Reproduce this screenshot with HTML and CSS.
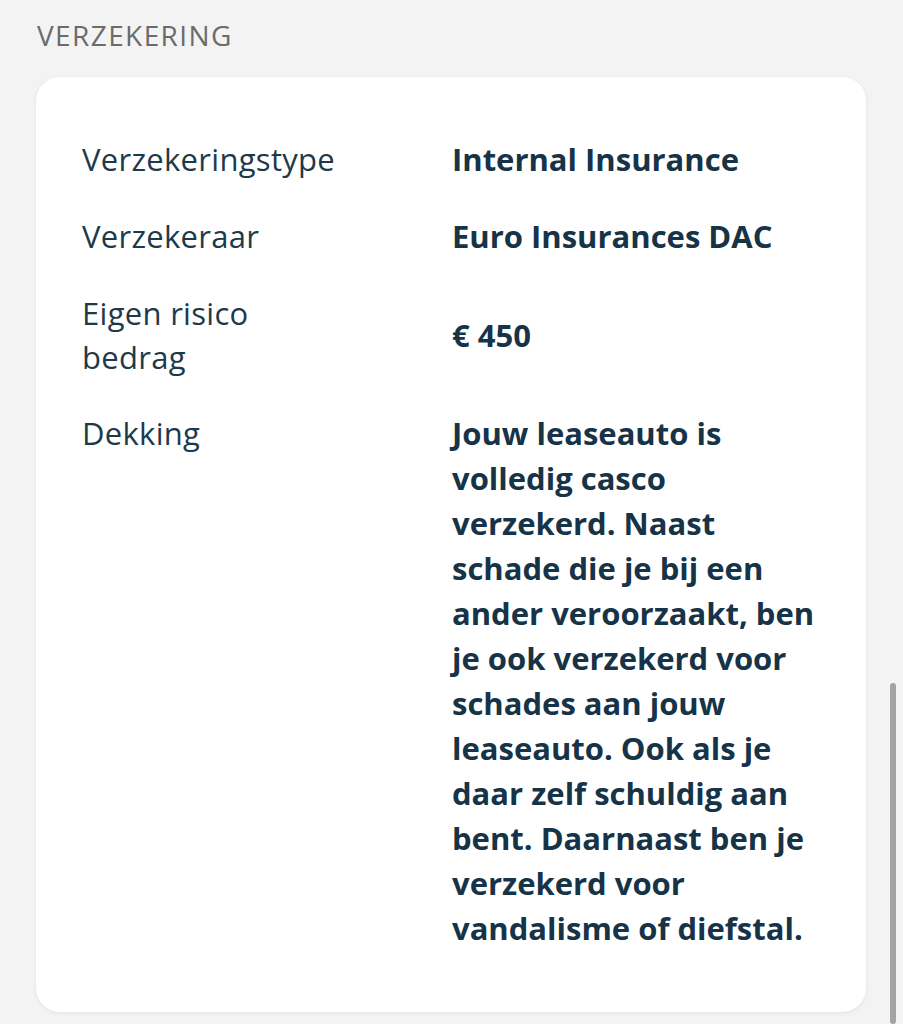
FILE: index.html
```html
<!DOCTYPE html>
<html lang="nl">
<head>
  <meta charset="UTF-8">
  <meta name="viewport" content="width=device-width, initial-scale=1.0">
  <title>Verzekering</title>
  <link rel="stylesheet" href="styles.css">
</head>
<body>
<div class="page">
  <h2 class="section-title">VERZEKERING</h2>

  <div class="card">
    <div class="row">
      <div class="label">Verzekeringstype</div>
      <div class="value">Internal Insurance</div>
    </div>
    <div class="row">
      <div class="label">Verzekeraar</div>
      <div class="value">Euro Insurances DAC</div>
    </div>
    <div class="row center">
      <div class="label">Eigen risico bedrag</div>
      <div class="value">€ 450</div>
    </div>
    <div class="row">
      <div class="label">Dekking</div>
      <div class="value">Jouw leaseauto is volledig casco verzekerd. Naast schade die je bij een ander veroorzaakt, ben je ook verzekerd voor schades aan jouw leaseauto. Ook als je daar zelf schuldig aan bent. Daarnaast ben je verzekerd voor vandalisme of diefstal.</div>
    </div>
  </div>
</div>
<div class="scrollbar"></div>
</body>
</html>
```

FILE: styles.css
```css
html, body {
  height: 100%;
}
body {
  margin: 0;
  background-color: #f3f3f4;
  font-family: "Open Sans", "Noto Sans", sans-serif;
  color: #1d3a4b;
  overflow: hidden;
}
.page {
  padding: 21px 37px 0 36px;
}
.section-title {
  margin: 0 0 28px 1px;
  font-size: 28px;
  font-weight: 500;
  letter-spacing: 1.4px;
  color: #6b6b6b;
  line-height: 28px;
}
.card {
  background: white;
  border-radius: 24px;
  box-shadow: 0 1px 4px rgba(0, 0, 0, 0.07);
  padding: 44px 42px 45px 46px;
}
.row {
  display: grid;
  grid-template-columns: 370px 1fr;
  align-items: start;
  padding: 16px 0;
}
.row.center {
  align-items: center;
}
.label {
  font-size: 31px;
  line-height: 44px;
  letter-spacing: 0.3px;
  padding-right: 110px;
}
.value {
  font-size: 31px;
  line-height: 45px;
  font-weight: 700;
  color: #163347;
}
.scrollbar {
  position: absolute;
  right: 7px;
  top: 683px;
  bottom: 0;
  width: 6px;
  border-radius: 3px;
  background: #a3a3a3;
}
```
